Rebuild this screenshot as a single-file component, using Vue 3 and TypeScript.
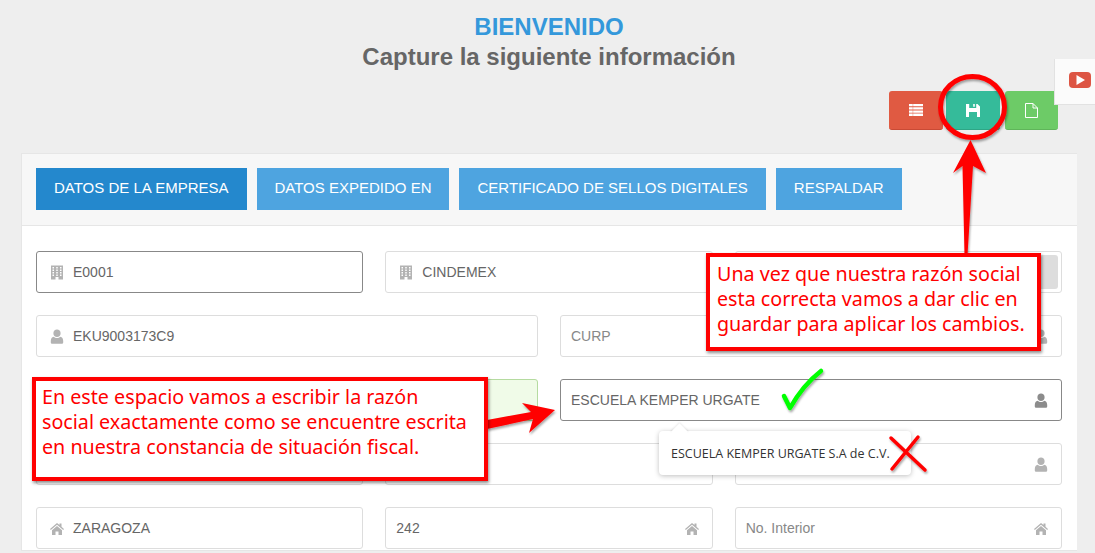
<script setup lang="ts">
// campos del formulario, fila por fila
type Field = {
  value?: string
  placeholder?: string
  icon?: 'building' | 'user' | 'home'
  side?: 'left' | 'right'
  state?: 'focus' | 'valid' | 'switch'
}

const tabs = ['DATOS DE LA EMPRESA', 'DATOS EXPEDIDO EN', 'CERTIFICADO DE SELLOS DIGITALES', 'RESPALDAR']

const rows: { cols: number; fields: Field[] }[] = [
  {
    cols: 3,
    fields: [
      { value: 'E0001', icon: 'building', side: 'left', state: 'focus' },
      { value: 'CINDEMEX', icon: 'building', side: 'left' },
      { state: 'switch' },
    ],
  },
  {
    cols: 2,
    fields: [
      { value: 'EKU9003173C9', icon: 'user', side: 'left' },
      { placeholder: 'CURP', icon: 'user', side: 'right' },
    ],
  },
  {
    cols: 2,
    fields: [
      { state: 'valid' },
      { value: 'ESCUELA KEMPER URGATE', icon: 'user', side: 'right', state: 'focus' },
    ],
  },
  {
    cols: 3,
    fields: [{}, {}, { icon: 'user', side: 'right' }],
  },
  {
    cols: 3,
    fields: [
      { value: 'ZARAGOZA', icon: 'home', side: 'left' },
      { value: '242', icon: 'home', side: 'right' },
      { placeholder: 'No. Interior', icon: 'home', side: 'right' },
    ],
  },
]

const iconPaths: Record<string, string> = {
  building:
    'M1 .5h12v14H8.500v-2.500h-3v2.500H1zM2.500 2v1.500H4V2zm3.750 0v1.500h1.500V2zM10 2v1.500h1.500V2zM2.500 4.500V6H4V4.500zm3.750 0V6h1.500V4.500zm3.750 0V6h1.500V4.500zM2.500 7v1.500H4V7zm3.750 0v1.500h1.500V7zM10 7v1.500h1.500V7zM2.500 9.500V11H4V9.500zm3.750 0V11h1.500V9.500zm3.750 0V11h1.500V9.500z',
  user: 'M7 .5a3.600 3.600 0 0 1 3.600 3.800A3.600 3.600 0 0 1 7 8.100a3.600 3.600 0 0 1-3.600-3.800A3.600 3.600 0 0 1 7 .5zM3.600 7.700c1 .9 2.100 1.300 3.400 1.300s2.400-.4 3.400-1.300c1.700.3 2.800 1.900 2.800 4.300v1.400c0 .9-.7 1.300-1.500 1.300H2.300c-.8 0-1.500-.4-1.500-1.300V12c0-2.400 1.100-4 2.800-4.300z',
  home: 'M7 2 0 8l.8 1L7 3.700 13.200 9l.8-1-2.500-2.200V2.500h-2v1.600zM7 5 2 9.300V14h3.500v-3.500h3V14H12V9.300z',
}
</script>

<template>
  <div class="page">
    <header class="heading">
      <h1>BIENVENIDO</h1>
      <h2>Capture la siguiente información</h2>
    </header>

    <div class="actions">
      <button class="action red" type="button">
        <svg width="14" height="12" viewBox="0 0 14 12">
          <path fill="#fff" d="M0 0h14v2.300H0zM0 3.200h14v2.300H0zM0 6.400h14v2.300H0zM0 9.600h14V12H0z" />
          <path fill="#e05a42" opacity="0.45" d="M3.500 0h.8v12h-.8z" />
        </svg>
      </button>
      <button class="action teal" type="button">
        <svg width="14" height="13" viewBox="0 0 14 13">
          <path fill="#fff" fill-rule="evenodd" d="M0 0h11.500L14 2.500V13H0zM3.200 0v4h7V0H8.800v2.800H7.200V0zM3 8v5h8V8z" />
        </svg>
      </button>
      <button class="action green" type="button">
        <svg width="13" height="15" viewBox="0 0 13 15">
          <path fill="none" stroke="#fff" stroke-width="1" d="M.5.500h7.500l4.500 4.500v9.500H.5zM8 .5V5h4.500" />
        </svg>
      </button>
    </div>

    <aside class="video-tab">
      <svg width="22" height="16" viewBox="0 0 22 16">
        <rect width="22" height="16" rx="4" fill="#dd5544" />
        <path fill="#fff" d="M7.500 3 16 8l-8.500 5z" />
      </svg>
    </aside>

    <section class="card">
      <nav class="tabs">
        <a v-for="(tab, i) in tabs" :key="tab" class="tab" :class="{ active: i === 0 }">{{ tab }}</a>
      </nav>

      <div class="form">
        <div v-for="(row, r) in rows" :key="r" class="row" :class="row.cols === 3 ? 'three' : 'two'">
          <div
            v-for="(field, f) in row.fields"
            :key="f"
            class="field"
            :class="[field.state, field.side]"
          >
            <svg v-if="field.icon" class="field-icon" width="14" height="15" viewBox="0 0 14 15">
              <path fill-rule="evenodd" :d="iconPaths[field.icon]" />
            </svg>
            <span v-if="field.value" class="value">{{ field.value }}</span>
            <span v-else-if="field.placeholder" class="placeholder">{{ field.placeholder }}</span>
            <span v-if="field.state === 'switch'" class="switch-thumb"></span>
          </div>
        </div>
      </div>
    </section>

    <!-- popover de la razon social -->
    <div class="popover">ESCUELA KEMPER URGATE S.A de C.V.</div>

    <!-- anotaciones sobre la captura -->
    <svg class="marks" width="1095" height="553" viewBox="0 0 1095 553">
      <defs>
        <filter id="soft" x="-20%" y="-20%" width="140%" height="140%">
          <feDropShadow dx="1" dy="2" stdDeviation="1.200" flood-color="#000" flood-opacity="0.35" />
        </filter>
      </defs>
      <ellipse cx="972.500" cy="107" rx="32" ry="30.500" fill="none" stroke="#ff0000" stroke-width="5" filter="url(#soft)" />
      <path fill="#ff0000" filter="url(#soft)" d="M970.500 140 986 173 973 166 967.500 255 964.500 255 962.500 166 953 173z" />
      <path fill="#ff0000" filter="url(#soft)" d="M555 410 529 433 533 419 487 429 487 420 531 412 522 403z" />
      <path fill="none" stroke="#00ff00" stroke-width="4.500" stroke-linecap="round" stroke-linejoin="round" filter="url(#soft)" d="M784 396Q787 402 790 408 803 385 821 371" />
      <path fill="none" stroke="#ff0000" stroke-width="3.500" stroke-linecap="round" filter="url(#soft)" d="M918 437 892 469M891 438 925 470" />
    </svg>

    <div class="note note-save">
      Una vez que nuestra razón social<br />
      esta correcta vamos a dar clic en<br />
      guardar para aplicar los cambios.
    </div>
    <div class="note note-name">
      En este espacio vamos a escribir la razón<br />
      social exactamente como se encuentre escrita<br />
      en nuestra constancia de situación fiscal.
    </div>
  </div>
</template>

<style>
html,
body {
  margin: 0;
  overflow: hidden;
  background: #eeeeee;
}
</style>

<style scoped>
.page {
  position: relative;
  width: 1095px;
  height: 553px;
  overflow: hidden;
  background: #eeeeee;
  font-family: "Liberation Sans", Arial, sans-serif;
}

.heading {
  height: 91px;
  padding-top: 13px;
  box-sizing: border-box;
  text-align: center;
  margin-left: 3px;
}

.heading h1 {
  margin: 0;
  font-size: 24px;
  line-height: 28px;
  font-weight: 700;
  color: #3498db;
}

.heading h2 {
  margin: 2px 0 0;
  font-size: 24px;
  line-height: 28px;
  font-weight: 700;
  color: #666666;
}

.actions {
  display: flex;
  justify-content: flex-end;
  height: 39px;
  padding-right: 37px;
  gap: 3px;
}

.action {
  width: 54px;
  height: 39px;
  padding: 0;
  border: 0;
  border-radius: 3px;
  display: flex;
  align-items: center;
  justify-content: center;
}

.action.red {
  background: #e05a42;
  border-bottom: 1px solid #c94a35;
}

.action.teal {
  background: #35bb9a;
  border-bottom: 1px solid #2ea686;
}

.action.green {
  margin-left: 2px;
  width: 53px;
  background: #6dcb67;
  border-bottom: 1px solid #5fb55a;
}

.video-tab {
  position: absolute;
  top: 59px;
  right: 0;
  width: 41px;
  height: 46px;
  padding: 0 0 4px 14px;
  box-sizing: border-box;
  display: flex;
  align-items: center;
  background: #fbfbfb;
  border: 1px solid #e2e2e2;
  border-width: 0 0 1px 1px;
}

.card {
  margin: 23px 18px 0 21px;
  height: 398px;
  background: #ffffff;
  border: 1px solid #e6e6e6;
  border-width: 1px 0 1px 1px;
  box-sizing: border-box;
  overflow: hidden;
}

.tabs {
  display: flex;
  gap: 10px;
  height: 72px;
  padding: 14px 14px 0;
  box-sizing: border-box;
  background: #f7f7f7;
  border-bottom: 1px solid #e6e6e6;
}

.tab {
  height: 42px;
  padding: 0 18px 3px;
  box-sizing: border-box;
  display: flex;
  align-items: center;
  font-size: 15px;
  color: #ffffff;
  background: #4ea4e0;
}

.tab.active {
  background: #2488cd;
}

.form {
  padding: 25px 15px 0 14px;
  display: flex;
  flex-direction: column;
  gap: 22px;
}

.row {
  display: grid;
  column-gap: 22px;
}

.row.three {
  grid-template-columns: repeat(3, 1fr);
}

.row.two {
  grid-template-columns: repeat(2, 1fr);
}

.field {
  height: 42px;
  padding: 0 10px;
  box-sizing: border-box;
  display: flex;
  align-items: center;
  gap: 9px;
  background: #ffffff;
  border: 1px solid #dddddd;
  border-radius: 3px;
  font-size: 14px;
  color: #666666;
}

.field.right {
  flex-direction: row-reverse;
  justify-content: space-between;
  padding-right: 13px;
}

.field.left {
  padding-left: 13px;
}

.field.focus {
  border-color: #888888;
}

.field.valid {
  background: #f0fbe8;
  border-color: #b5dba0;
}

.field.switch {
  justify-content: flex-end;
  padding-right: 3px;
}

.field-icon path {
  fill: #b3b3b3;
}

.field.focus.right .field-icon path {
  fill: #8c8c8c;
}

.switch-thumb {
  width: 22px;
  height: 34px;
  background: #dddddd;
  border-radius: 3px;
}

.placeholder {
  color: #888888;
}

.popover {
  position: absolute;
  left: 659px;
  top: 431px;
  width: 252px;
  height: 44px;
  padding-left: 12px;
  box-sizing: border-box;
  display: flex;
  align-items: center;
  background: #ffffff;
  border-radius: 4px;
  box-shadow: 0 1px 5px rgba(0, 0, 0, 0.25);
  font-family: "Open Sans", sans-serif;
  font-size: 12.500px;
  color: #333333;
  white-space: nowrap;
}

.popover::before {
  content: "";
  position: absolute;
  left: 13.500px;
  top: -5px;
  width: 13px;
  height: 13px;
  background: #ffffff;
  transform: rotate(45deg);
  box-shadow: -1px -1px 2px rgba(0, 0, 0, 0.08);
  clip-path: polygon(-30% -30%, 130% -30%, -30% 130%);
}

.marks {
  position: absolute;
  left: 0;
  top: 0;
}

.note {
  position: absolute;
  box-sizing: border-box;
  background: #ffffff;
  border: 4px solid #ff0000;
  box-shadow: 1px 2px 3px rgba(0, 0, 0, 0.45);
  color: #ff0000;
  font-family: "Noto Sans", sans-serif;
  font-size: 19.700px;
  line-height: 25px;
  white-space: nowrap;
}

.note-save {
  left: 706px;
  top: 253px;
  width: 335px;
  height: 98px;
  padding: 4px 0 0 7px;
}

.note-name {
  left: 32px;
  top: 377px;
  width: 456px;
  height: 104px;
  padding: 3px 0 0 6px;
}
</style>
